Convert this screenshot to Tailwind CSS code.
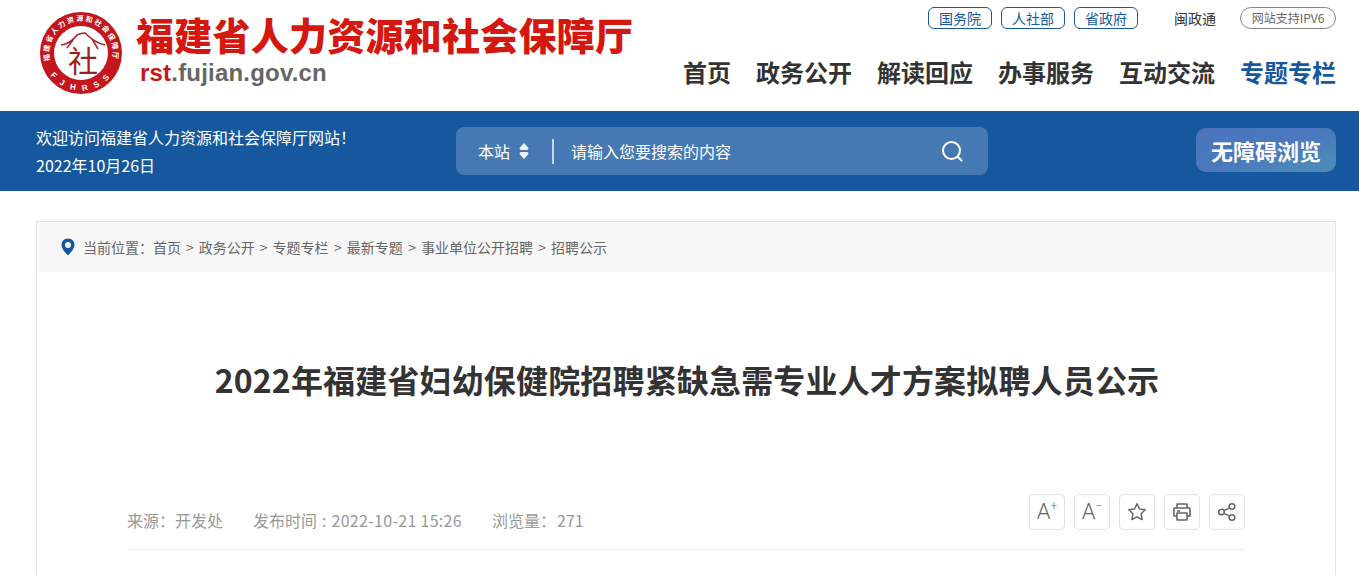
<!DOCTYPE html>
<html lang="zh">
<head>
<meta charset="utf-8">
<script src="https://cdn.jsdelivr.net/npm/@tailwindcss/browser@4"></script>
<title>福建省人力资源和社会保障厅</title>
</head>
<body class="bg-white overflow-hidden font-['Noto_Sans_CJK_SC','Noto_Sans',sans-serif] text-[#333]">
<div class="h-[575px] overflow-hidden">
<header class="h-[111px] w-[1300px] ml-[36px] flex justify-between">
  <div class="flex pt-[11px] items-start">
    <svg width="84" height="84" viewBox="0 0 84 84" class="ml-[3px] mt-[1px] shrink-0">
      <defs><path id="arc" d="M 11 49 A 32 32 0 1 1 73 49"/><path id="arc2" d="M 9.5 59.75 A 37.5 37.5 0 0 0 74.5 59.75"/></defs>
      <circle cx="42" cy="41" r="41" fill="#c4161c"/>
      <circle cx="42" cy="41" r="27" fill="#fff"/>
      <text font-size="7.2" font-weight="700" fill="#fff" letter-spacing="1.7" font-family="'Noto Sans CJK SC'"><textPath href="#arc">福建省人力资源和社会保障厅</textPath></text>
      <text font-size="8" font-weight="700" fill="#fff" font-family="'Liberation Sans'" letter-spacing="7.2"><textPath href="#arc2" startOffset="4">FJHRSS</textPath></text>
      <path d="M22 33 C30 32 35 27 38 23 Q42 21 46 21 C50 25 56 31 66 33 M53 27 L59 37 M34 28 L28 36" fill="none" stroke="#a5252a" stroke-width="1.5"/>
      <text x="44" y="60" text-anchor="middle" font-size="30" font-weight="400" fill="#9c1f24" font-family="'Noto Sans CJK SC'">社</text>
    </svg>
    <div class="ml-[13px]">
      <div class="text-[38px] leading-[46px] font-black text-[#d4180f] tracking-[0.25px] whitespace-nowrap font-['Noto_Sans_CJK_SC',sans-serif]">福建省人力资源和社会保障厅</div>
      <div class="ml-[4px] mt-[2px] text-[24px] leading-[28px] font-bold tracking-[0.2px] text-[#666] font-['Liberation_Sans',sans-serif]"><span class="text-[#c4161c]">rst</span>.fujian.gov.cn</div>
    </div>
  </div>
  <div class="w-[660px] flex flex-col items-end">
    <div class="flex items-center mt-[7px] h-[22px] text-[14px]">
      <a class="w-[64px] h-[22px] mr-[9px] border border-[#15589e] rounded-[6px] text-[#15589e] flex items-center justify-center">国务院</a>
      <a class="w-[64px] h-[22px] mr-[9px] border border-[#15589e] rounded-[6px] text-[#15589e] flex items-center justify-center">人社部</a>
      <a class="w-[64px] h-[22px] border border-[#15589e] rounded-[6px] text-[#15589e] flex items-center justify-center">省政府</a>
      <span class="ml-[36px] mr-[1px] text-[#333]">闽政通</span>
      <span class="ml-[23px] w-[96px] h-[22px] border border-[#888] rounded-full text-[#666] flex items-center justify-center text-[12px] whitespace-nowrap">网站支持IPV6</span>
    </div>
    <nav class="mt-[13px] flex gap-[25px] text-[24px] leading-[60px] font-bold whitespace-nowrap">
      <a>首页</a><a>政务公开</a><a>解读回应</a><a>办事服务</a><a>互动交流</a><a class="text-[#15589e]">专题专栏</a>
    </nav>
  </div>
</header>
<section class="h-[80px] bg-[#15589e]">
  <div class="w-[1300px] ml-[36px] h-full relative flex items-center justify-between text-white">
    <div class="text-[16px] leading-[28px] whitespace-nowrap">
      <p>欢迎访问福建省人力资源和社会保障厅网站！</p>
      <p>2022年10月26日</p>
    </div>
    <div class="absolute left-[420px] top-[16px] w-[532px] h-[48px] bg-[#4679b3] rounded-[8px] flex items-center text-[16px]">
      <span class="ml-[22px]">本站</span>
      <svg width="10" height="18" viewBox="0 0 10 18" class="ml-[9px]"><path d="M5 1 L9.5 6 Q9.5 8 8 8 H2 Q0.5 8 0.5 6 Z M5 17 L0.5 12 Q0.5 10 2 10 H8 Q9.5 10 9.5 12 Z" fill="#fff" fill-opacity="0.9"/></svg>
      <span class="ml-[23px] w-[2px] h-[25px] bg-white/70"></span>
      <span class="ml-[17px]">请输入您要搜索的内容</span>
      <svg width="24" height="24" viewBox="0 0 24 24" class="absolute left-[484px] top-[12px]" fill="none" stroke="#fff" stroke-width="2"><circle cx="11.5" cy="11.5" r="8.5"/><path d="M17.5 17.5 L22 22"/></svg>
    </div>
    <div class="w-[140px] h-[44px] mt-[-2px] rounded-[10px] bg-gradient-to-br from-[#4a75bd] via-[#4b78bd] to-[#4b90b6] flex items-center justify-center text-[22px] font-bold">无障碍浏览</div>
  </div>
</section>
<main class="mt-[30px] ml-[36px] w-[1300px] h-[400px] border border-[#e5e5e5]">
  <div class="h-[50px] bg-[#f7f7f7] flex items-center pl-[24px] text-[14px] text-[#666] whitespace-nowrap">
    <svg width="14" height="18" viewBox="0 0 14 18" class="mr-[8px]"><path fill-rule="evenodd" d="M7 0.5 C3.2 0.5 0.5 3.3 0.5 6.8 C0.5 11 5 15.5 7 17.5 C9 15.5 13.5 11 13.5 6.8 C13.5 3.3 10.8 0.5 7 0.5 Z M7 4 A3 3 0 1 1 7 10 A3 3 0 1 1 7 4 Z" fill="#15589e"/></svg>
    <span>当前位置：</span><span>首页</span>
    <span class="mx-[5px]">&gt;</span><span>政务公开</span>
    <span class="mx-[5px]">&gt;</span><span>专题专栏</span>
    <span class="mx-[5px] pl-[0.5px]">&gt;</span><span>最新专题</span>
    <span class="mx-[5px] pl-[0.5px]">&gt;</span><span>事业单位公开招聘</span>
    <span class="mx-[5px]">&gt;</span><span>招聘公示</span>
  </div>
  <h1 class="mt-[81px] pl-[2px] text-center text-[32px] leading-[52px] font-bold tracking-[0.16px] text-[#333] whitespace-nowrap">2022年福建省妇幼保健院招聘紧缺急需专业人才方案拟聘人员公示</h1>
  <div class="mx-[90px] mt-[89px] h-[56px] border-b border-[#eee] flex justify-between items-start text-[#999] text-[16px]">
    <div class="flex pt-[11px] leading-[30px] whitespace-nowrap">
      <span>来源：开发处</span>
      <span class="ml-[30px]">发布时间<span class="mx-[5px]">:</span><span class="tracking-[0.3px]">2022-10-21 15:26</span></span>
      <span class="ml-[30px]">浏览量：<span class="ml-[1px]">271</span></span>
    </div>
    <div class="flex gap-[9px]">
      <button class="w-[36px] h-[36px] border border-[#e2e2e2] rounded-[5px] flex items-center justify-center text-[#666] text-[22px] font-light leading-none font-['Roboto',sans-serif]">A<sup class="text-[12px]">+</sup></button>
      <button class="w-[36px] h-[36px] border border-[#e2e2e2] rounded-[5px] flex items-center justify-center text-[#666] text-[22px] font-light leading-none font-['Roboto',sans-serif]">A<sup class="text-[12px]">−</sup></button>
      <button class="w-[36px] h-[36px] border border-[#e2e2e2] rounded-[5px] flex items-center justify-center"><svg width="20" height="20" viewBox="0 0 20 20" fill="none" stroke="#666" stroke-width="1.5" stroke-linejoin="round"><path d="M10 1.8 L12.5 7 L18.2 7.8 L14.1 11.8 L15.1 17.6 L10 14.8 L4.9 17.6 L5.9 11.8 L1.8 7.8 L7.5 7 Z"/></svg></button>
      <button class="w-[36px] h-[36px] border border-[#e2e2e2] rounded-[5px] flex items-center justify-center"><svg width="20" height="20" viewBox="0 0 20 20" fill="none" stroke="#666" stroke-width="1.6" stroke-linejoin="round"><path d="M5 6 V2 H15 V6 M5 14 H2 V6.5 Q2 6 3 6 H17 Q18 6 18 6.5 V14 H15"/><path d="M5 11 H15 V18 H5 Z"/><path d="M5 9 H8"/></svg></button>
      <button class="w-[36px] h-[36px] border border-[#e2e2e2] rounded-[5px] flex items-center justify-center"><svg width="20" height="20" viewBox="0 0 20 20" fill="none" stroke="#666" stroke-width="1.5"><circle cx="15" cy="4.5" r="2.8"/><circle cx="4.5" cy="10" r="2.8"/><circle cx="15" cy="15.5" r="2.8"/><path d="M7 8.6 L12.6 5.8 M7 11.4 L12.6 14.2"/></svg></button>
    </div>
  </div>
</main>
</div>
</body>
</html>
